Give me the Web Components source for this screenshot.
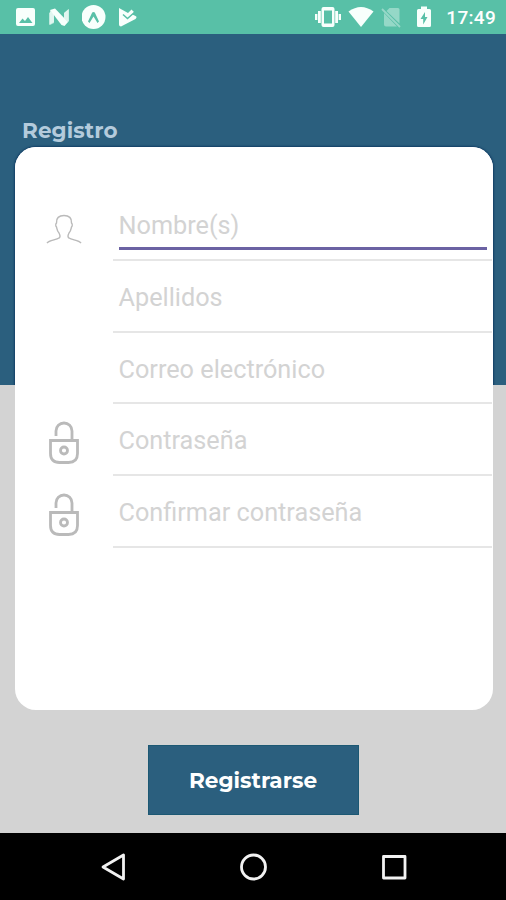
<!DOCTYPE html>
<html lang="es">
<head>
<meta charset="utf-8">
<meta name="viewport" content="width=device-width, initial-scale=1">
<title>Registro</title>
<style>
  :root {
    --blue: #2b5f7e;
    --mint: #58c0a7;
    --gray: #d3d3d3;
    --line: #e6e6e6;
    --hint: #d3d3d3;
    --focus: #6b62a3;
    --font-body: Roboto, 'Liberation Sans', sans-serif;
    --font-display: Montserrat, Inter, sans-serif;
  }

  body {
    margin: 0;
    overflow: hidden;
  }
</style>
</head>
<body>

<phone-screen>
  <status-bar slot="status" time="17:49"></status-bar>
  <form-card heading="Registro">
    <form-field icon="user" hint="Nombre(s)" active></form-field>
    <form-field hint="Apellidos"></form-field>
    <form-field hint="Correo electrónico"></form-field>
    <form-field icon="lock" hint="Contraseña"></form-field>
    <form-field icon="lock" hint="Confirmar contraseña"></form-field>
  </form-card>
  <submit-button>Registrarse</submit-button>
  <nav-bar slot="nav"></nav-bar>
</phone-screen>

<script>
'use strict';

function makeTemplate(html) {
  const template = document.createElement('template');
  template.innerHTML = html;
  return template;
}

/* ---------- Screen ---------- */
const screenTemplate = makeTemplate(`
  <style>
    :host {
      display: flex;
      flex-direction: column;
      width: 506px;
      height: 900px;
    }

    main {
      flex: 1;
      display: flex;
      flex-direction: column;
      align-items: center;
      background: linear-gradient(var(--blue) 351px, var(--gray) 351px);
    }
  </style>
  <slot name="status"></slot>
  <main><slot></slot></main>
  <slot name="nav"></slot>
`);

class PhoneScreen extends HTMLElement {
  constructor() {
    super();
    this.attachShadow({ mode: 'open' });
    this.shadowRoot.appendChild(screenTemplate.content.cloneNode(true));
  }
}

/* ---------- Status bar ---------- */
const statusTemplate = makeTemplate(`
  <style>
    :host {
      display: flex;
      justify-content: space-between;
      align-items: center;
      box-sizing: border-box;
      height: 34px;
      padding: 0 10px 0 15px;
      background-color: var(--mint);
      color: #fff;
      font: 500 19px/34px var(--font-body);
    }

    div {
      display: flex;
      align-items: center;
    }

    .left { gap: 12px; }
    .right { gap: 7px; }

    svg {
      display: block;
      fill: #f8fffc;
    }

    .battery { margin: 0 8px 0 8px; }
    .time { letter-spacing: 0.3px; padding-top: 2px; }
  </style>

  <div class="left">
    <svg width="21" height="24" viewBox="0 0 21 24">
      <path fill-rule="evenodd" d="M3 3h15q2 0 2 2v14q0 2-2 2H3q-2 0-2-2V5q0-2 2-2zM4 18h13.500l-4.500-6-3 4-2.500-2.500z"/>
    </svg>
    <svg width="22" height="24" viewBox="0 0 22 24">
      <path opacity=".65" d="M1 8l5-4v13l-5 3zM16 8l5-4v12l-5 4z"/>
      <path d="M2 5l5-1.500L20 17l-3.500 4-3-1z"/>
      <path opacity=".6" d="M2 5l4 4v9l-4 2zM16 8l4.500-4v13l-4.500-4z"/>
    </svg>
    <svg width="24" height="26" viewBox="0 0 24 26">
      <circle cx="11.500" cy="13" r="12"/>
      <path d="M6 17.500l4.200-9q1.300-1.200 2.600 0l4.200 9-1.500 1.500-4-6.500-4 6.500z" fill="#58c0a7"/>
    </svg>
    <svg width="20" height="24" viewBox="0 0 20 24">
      <path d="M1 3l9 5 3.500-3.500L16 7l-1.500 2.500 3 1.500q2 1 0 3L3 21.500q-2 0-2-2z"/>
      <path d="M5 9.500l4.500 4 8-7" fill="none" stroke="#58c0a7" stroke-width="1.500"/>
    </svg>
  </div>

  <div class="right">
    <svg width="26" height="24" viewBox="0 0 26 24">
      <path fill-rule="evenodd" d="M8.500 2h9q2 0 2 2v16q0 2-2 2h-9q-2 0-2-2V4q0-2 2-2zM9 5.500v13h8v-13z"/>
      <path d="M3 6h2.800v12H3zM0 9h2.400v6H0zM20.200 6H23v12h-2.800zM23.600 9H26v6h-2.400z"/>
    </svg>
    <svg width="26" height="24" viewBox="0 0 26 24">
      <path d="M.5 6.500Q13-2.500 25.500 6.500L13 22z"/>
    </svg>
    <svg width="21" height="24" viewBox="0 0 21 24" opacity=".38">
      <path d="M8.500 3H17q1.500 0 1.500 1.500v14L5.500 6zM3 8l13 13.500H5q-2 0-2-2z"/>
      <path d="M1 4l18 18" stroke="#fff" stroke-width="1.800"/>
    </svg>
    <svg class="battery" width="14" height="24" viewBox="0 0 14 24">
      <path fill-rule="evenodd" d="M4 1.500h6V4h2.500q1.500 0 1.500 1.500v15q0 1.500-1.500 1.500h-11Q0 22 0 20.500v-15Q0 4 1.500 4H4zM8 7l-4.500 7h2.700v5.500l4.300-7.500H8z"/>
    </svg>
    <span class="time"></span>
  </div>
`);

class StatusBar extends HTMLElement {
  constructor() {
    super();
    this.attachShadow({ mode: 'open' });
    this.shadowRoot.appendChild(statusTemplate.content.cloneNode(true));
  }

  connectedCallback() {
    this.shadowRoot.querySelector('.time').textContent =
      this.getAttribute('time');
  }
}

/* ---------- Card ---------- */
const cardTemplate = makeTemplate(`
  <style>
    :host {
      display: block;
      width: 478px;
      margin-top: 82px;
      margin-left: 1px;
    }

    h1 {
      margin: 0;
      padding-left: 7.5px;
      height: 31px;
      font: 700 21.5px/28px var(--font-display);
      letter-spacing: 0.1px;
      color: #b4cbdc;
    }

    .card {
      display: grid;
    }

    .edge,
    section {
      grid-area: 1 / 1;
      box-sizing: border-box;
      height: 563px;
      border-radius: 21px;
      background-color: #fff;
    }

    /* thin dark edge, only where the card lies on the blue */
    .edge {
      box-shadow: 0 0 2px 1px rgba(0, 40, 85, 0.6);
      clip-path: inset(-3px -3px 325px -3px);
    }

    section {
      z-index: 1;
      padding: 42px 1px 0 0;
    }
  </style>
  <h1></h1>
  <div class="card">
    <div class="edge"></div>
    <section><slot></slot></section>
  </div>
`);

class FormCard extends HTMLElement {
  constructor() {
    super();
    this.attachShadow({ mode: 'open' });
    this.shadowRoot.appendChild(cardTemplate.content.cloneNode(true));
  }

  connectedCallback() {
    this.shadowRoot.querySelector('h1').textContent =
      this.getAttribute('heading');
  }
}

/* ---------- Field ---------- */
const icons = {
  user: `
    <svg width="36" height="36" viewBox="0 -4 36 36" stroke-width="1.400">
      <path d="M1 29c2-3 9-3 12-5 2-1 1-3 0-5-2-2-2-4-2.500-6-1-1-1-3 0-4C10 4 13 1.500 18 1.500S26 4 25.500 9c1 1 1 3 0 4-.5 2-.5 4-2.500 6-1 2-2 4 0 5 3 2 10 2 12 5"/>
    </svg>`,
  lock: `
    <svg width="36" height="48" viewBox="0 0 36 48" stroke-width="2.800">
      <path d="M4.500 20.500h27v13q0 9-9 9h-9q-9 0-9-9zM10 16V11a8 8 0 0 1 16 0v9"/>
      <circle cx="18" cy="30.500" r="3.500"/>
    </svg>`
};

const fieldTemplate = makeTemplate(`
  <style>
    :host {
      display: grid;
      grid-template-columns: 98.5px 1fr;
      height: 71.8px;
    }

    .icon {
      display: flex;
      justify-content: center;
      align-items: center;
      padding-top: 7px;
    }

    svg {
      fill: none;
      stroke: #bababa;
    }

    .entry {
      display: flex;
      flex-direction: column;
      box-sizing: border-box;
      padding: 16px 4.5px 0 5.5px;
      border-bottom: 2px solid var(--line);
    }

    .hint {
      height: 42px;
      font: 400 25.25px/42px var(--font-body);
      white-space: nowrap;
      color: var(--hint);
    }

    :host([active]) .hint {
      border-bottom: 3px solid var(--focus);
    }
  </style>
  <div class="icon"></div>
  <div class="entry"><div class="hint"></div></div>
`);

class FormField extends HTMLElement {
  constructor() {
    super();
    this.attachShadow({ mode: 'open' });
    this.shadowRoot.appendChild(fieldTemplate.content.cloneNode(true));
  }

  connectedCallback() {
    const icon = this.getAttribute('icon');

    this.shadowRoot.querySelector('.icon').innerHTML = icons[icon] || '';
    this.shadowRoot.querySelector('.hint').textContent =
      this.getAttribute('hint');
  }
}

/* ---------- Button ---------- */
const buttonTemplate = makeTemplate(`
  <style>
    :host {
      display: block;
      margin-top: 35px;
    }

    button {
      display: block;
      width: 211px;
      height: 70px;
      padding: 0;
      border: 1px solid #1c5873;
      background-color: var(--blue);
      color: #fff;
      font: 700 21.6px/68px var(--font-display);
    }
  </style>
  <button type="button"><slot></slot></button>
`);

class SubmitButton extends HTMLElement {
  constructor() {
    super();
    this.attachShadow({ mode: 'open' });
    this.shadowRoot.appendChild(buttonTemplate.content.cloneNode(true));
  }
}

/* ---------- Navigation bar ---------- */
const navTemplate = makeTemplate(`
  <style>
    :host {
      display: flex;
      justify-content: space-between;
      align-items: center;
      box-sizing: border-box;
      height: 67px;
      padding: 0 98px 0 99px;
      background-color: #000;
    }

    svg {
      fill: none;
      stroke: #f2f2f2;
      stroke-width: 2.8;
      stroke-linejoin: round;
    }
  </style>
  <svg width="28" height="30" viewBox="0 0 28 30"><path d="M4 15L24.500 3v24z"/></svg>
  <svg width="28" height="30" viewBox="0 0 28 30"><circle cx="13.500" cy="15" r="12"/></svg>
  <svg width="28" height="30" viewBox="0 0 28 30"><rect x="3.500" y="4.500" width="21.500" height="21.500"/></svg>
`);

class NavBar extends HTMLElement {
  constructor() {
    super();
    this.attachShadow({ mode: 'open' });
    this.shadowRoot.appendChild(navTemplate.content.cloneNode(true));
  }
}

customElements.define('phone-screen', PhoneScreen);
customElements.define('status-bar', StatusBar);
customElements.define('form-card', FormCard);
customElements.define('form-field', FormField);
customElements.define('submit-button', SubmitButton);
customElements.define('nav-bar', NavBar);
</script>
</body>
</html>
